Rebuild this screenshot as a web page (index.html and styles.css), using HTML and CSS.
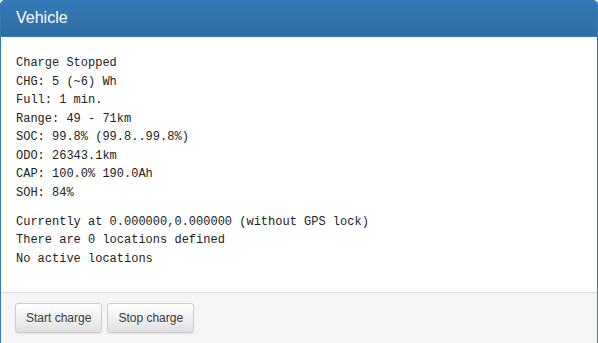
FILE: index.html
```html
<!DOCTYPE html>
<html>
<head>
<meta charset="utf-8">
<link rel="stylesheet" href="styles.css">
</head>
<body>
<div class="panel">
  <div class="panel-heading"><h3 class="panel-title">Vehicle</h3></div>
  <div class="panel-body">
    <div class="block">Charge Stopped<br>CHG: 5 (~6) Wh<br>Full: 1 min.<br>Range: 49 - 71km<br>SOC: 99.8% (99.8..99.8%)<br>ODO: 26343.1km<br>CAP: 100.0% 190.0Ah<br>SOH: 84%</div>
    <div class="block">Currently at 0.000000,0.000000 (without GPS lock)<br>There are 0 locations defined<br>No active locations</div>
  </div>
  <div class="panel-footer">
    <button class="btn">Start charge</button>
    <button class="btn">Stop charge</button>
  </div>
</div>
</body>
</html>
```
FILE: styles.css
```css
html, body {
  margin: 0;
  padding: 0;
  background: #fff;
}
body {
  font-family: "Liberation Sans", Arial, sans-serif;
  font-size: 14px;
  line-height: 1.42857;
  color: #333;
}
.panel {
  border: 1px solid #337ab7;
  border-radius: 4px;
  background: #fff;
  height: 400px;
  box-sizing: border-box;
  overflow: hidden;
}
.panel-heading {
  padding: 8px 15px 10px;
  background: linear-gradient(to bottom, #337ab7 0%, #2e6da4 100%);
  border-bottom: 1px solid #337ab7;
  color: #fff;
}
.panel-title {
  margin: 0;
  font-size: 16px;
  font-weight: 500;
  line-height: 17px;
}
.panel-body {
  padding: 17px 15px 14px;
  font-family: "Liberation Mono", "DejaVu Sans Mono", monospace;
  font-size: 12px;
  line-height: 18.57px;
  color: #222;
}
.block {
  margin: 0 0 10px;
}
.panel-footer {
  padding: 10px 14px;
  background: #f5f5f5;
  border-top: 1px solid #ddd;
  display: flex;
  gap: 5px;
}
.btn {
  font-family: "Liberation Sans", Arial, sans-serif;
  font-size: 12px;
  line-height: 1.5;
  padding: 5px 10px;
  color: #333;
  border: 1px solid #ccc;
  border-radius: 3px;
  background: linear-gradient(to bottom, #fff 0%, #e0e0e0 100%);
  text-shadow: 0 1px 0 #fff;
  box-shadow: inset 0 1px 0 rgba(255,255,255,.15), 0 1px 1px rgba(0,0,0,.075);
  height: 30px;
  box-sizing: border-box;
}
```
